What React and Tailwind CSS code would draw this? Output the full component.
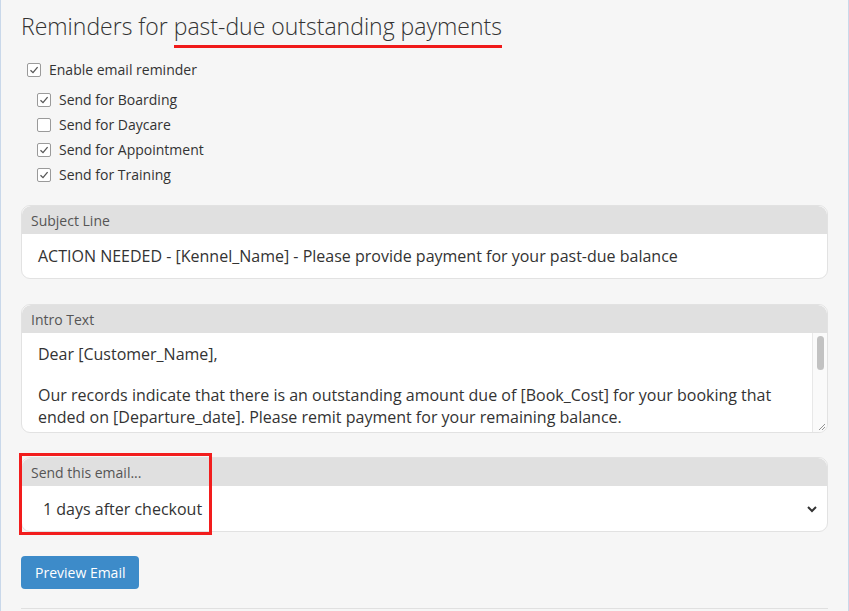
import React from "react";

function Box({ checked }) {
  return (
    <span className="inline-flex h-[14px] w-[14px] shrink-0 items-center justify-center rounded-[2px] border border-[#9a9a9a] bg-white">
      {checked && (
        <svg width="10" height="10" viewBox="0 0 10 10">
          <path d="M1.5 5.2 L4 7.6 L8.6 2.2" fill="none" stroke="#555" strokeWidth="1.3" />
        </svg>
      )}
    </span>
  );
}

function Check({ checked, label, className = "" }) {
  return (
    <div className={"flex h-[25px] items-center gap-[8px] " + className}>
      <Box checked={checked} />
      <span className="text-[14px] text-[#333]">{label}</span>
    </div>
  );
}

function CardHeader({ children }) {
  return (
    <div className="flex h-[28px] items-center rounded-t-[9px] bg-[#e0e0e0] px-[9px] text-[14px] text-[#555]">
      {children}
    </div>
  );
}

export default function App() {
  return (
    <div
      className="h-[611px] w-[849px] overflow-hidden border-x border-[#c9d8ea] bg-[#f6f6f6] text-[#333]"
      style={{ fontFamily: '"Open Sans", "Noto Sans", sans-serif' }}
    >
      <div className="px-[20px]">
        <h1 className="pt-[11px] text-[23px] font-light leading-[31px] text-[#333]">
          Reminders for{" "}
          <span className="border-b-[3px] border-[#f01a1a] pb-[3px]">past-due outstanding payments</span>
        </h1>

        <div className="mt-[15px] pl-[6px]">
          <Check checked label="Enable email reminder" />
          <div className="pl-[10px] pt-[5px]">
            <Check checked label="Send for Boarding" />
            <Check label="Send for Daycare" />
            <Check checked label="Send for Appointment" />
            <Check checked label="Send for Training" />
          </div>
        </div>

        <div className="mt-[18px] w-[807px] overflow-hidden rounded-[9px] border border-[#e2e2e2] bg-white">
          <CardHeader>Subject Line</CardHeader>
          <div className="flex h-[44px] items-center px-[16px] text-[16px] text-[#333]">
            ACTION NEEDED - [Kennel_Name] - Please provide payment for your past-due balance
          </div>
        </div>

        <div className="mt-[25px] w-[807px] overflow-hidden rounded-[9px] border border-[#e2e2e2] bg-white">
          <CardHeader>Intro Text</CardHeader>
          <div className="relative flex h-[99px]">
            <div className="flex-1 px-[16px] pt-[10px] text-[16px] leading-[22px] text-[#333]">
              <div>Dear [Customer_Name],</div>
              <div className="h-[19px]"></div>
              <div>
                Our records indicate that there is an outstanding amount due of [Book_Cost] for your booking that
                <br />
                ended on [Departure_date]. Please remit payment for your remaining balance.
              </div>
            </div>
            <div className="w-[15px] border-l border-[#e8e8e8] bg-[#fafafa] pt-[3px]">
              <div className="mx-auto h-[34px] w-[7px] rounded-full bg-[#c2c2c2]"></div>
            </div>
            <svg className="absolute bottom-[1px] right-[1px]" width="10" height="10" viewBox="0 0 10 10">
              <path d="M9 3 L3 9 M9 6 L6 9" stroke="#888" strokeWidth="0.9" />
            </svg>
          </div>
        </div>

        <div className="relative mt-[24px] w-[807px] overflow-visible rounded-[9px] border border-[#e2e2e2] bg-white">
          <CardHeader>Send this email...</CardHeader>
          <div className="flex h-[45px] items-center justify-between pl-[21px] pr-[9px] text-[16px] text-[#333]">
            <span>1 days after checkout</span>
            <svg width="12" height="8" viewBox="0 0 12 8">
              <path d="M2 2 L6 6 L10 2" fill="none" stroke="#333" strokeWidth="2" />
            </svg>
          </div>
          <div className="pointer-events-none absolute left-[-3px] top-[-5px] h-[82px] w-[193px] border-[3px] border-[#f21d1d]"></div>
        </div>

        <button className="mt-[24px] h-[33px] rounded-[4px] bg-[#3d8bc9] px-[14px] text-[14px] text-white">
          Preview Email
        </button>

        <div className="mt-[19px] w-[807px] border-t border-[#e0e0e0]"></div>
      </div>
    </div>
  );
}
